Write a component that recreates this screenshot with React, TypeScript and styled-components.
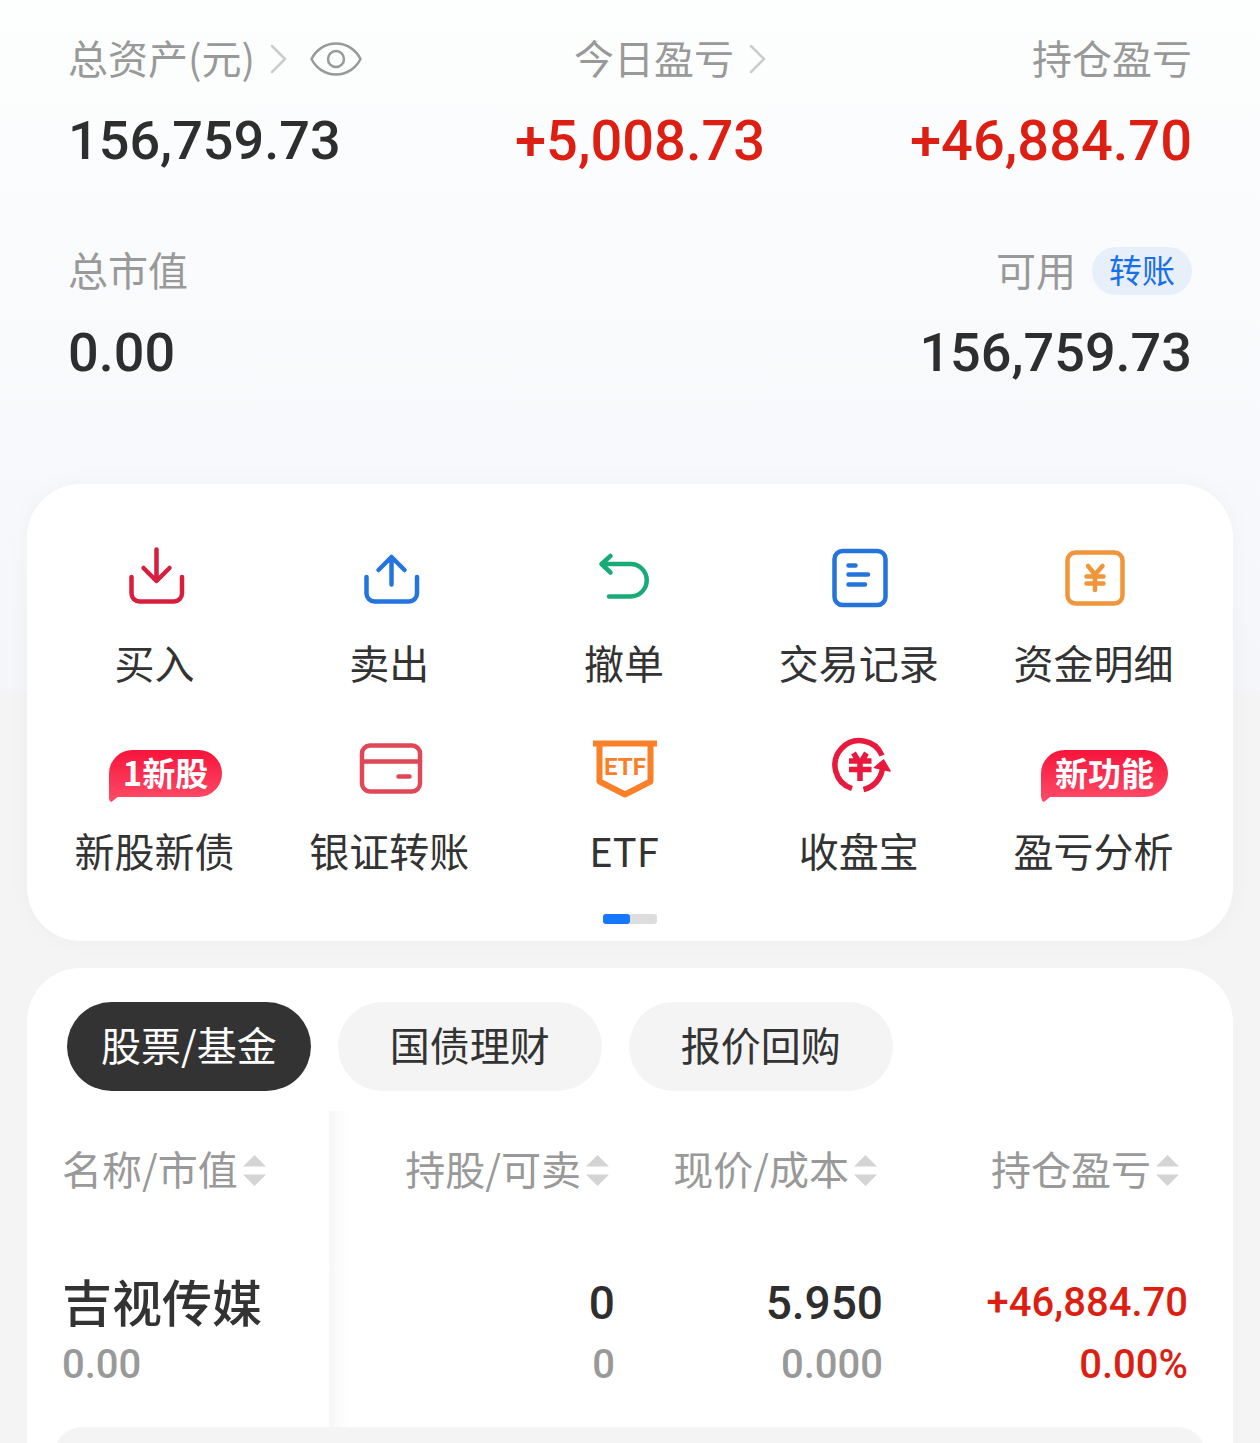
import React, { useState } from "react";
import styled, { createGlobalStyle } from "styled-components";

const cjk = `"Noto Sans CJK SC", "Noto Sans", sans-serif`;
const digits = `Roboto, "Noto Sans CJK SC", sans-serif`;

const color = {
  ink: "#2e2e2e",
  text: "#333333",
  muted: "#999999",
  rise: "#dc1f12",
  brand: "#1677ff",
  fill: "#f4f4f4",
};

const GlobalStyle = createGlobalStyle`
  *, *::before, *::after { box-sizing: border-box; }
  body { margin: 0; background: ${color.fill}; font-family: ${cjk}; color: ${color.text}; }
  button { border: 0; padding: 0; margin: 0; background: none; color: inherit; font: inherit; cursor: pointer; }
  a { color: inherit; text-decoration: none; }
`;

const Page = styled.main`
  background: linear-gradient(#fdfffe 0, #fafbfd 240px, #f4f6f9 691px, ${color.fill} 691px);
`;

const Summary = styled.header`
  display: flex;
  flex-direction: column;
  gap: 76px;
  padding: 31px 68px 105px;
`;

const SummaryRow = styled.div`
  display: flex;
  justify-content: space-between;
`;

const Metric = styled.section<{ $end?: boolean }>`
  display: flex;
  flex-direction: column;
  gap: 28px;
  align-items: ${(p) => (p.$end ? "flex-end" : "flex-start")};
`;

const MetricLabel = styled.div`
  display: flex;
  align-items: center;
  gap: 16px;
  height: 56px;
  font-size: 40px;
  line-height: 56px;
  color: ${color.muted};
`;

const LabelText = styled.span`
  padding-bottom: 4px;
`;

const LabelButton = styled.button`
  display: flex;
  align-items: center;
  gap: 16px;
`;

const EyeButton = styled.button`
  display: flex;
  padding: 0 8px;
`;

const MetricValue = styled.div<{ $rise?: boolean }>`
  font-family: ${digits};
  font-size: ${(p) => (p.$rise ? 56 : 54)}px;
  font-weight: 500;
  line-height: 52px;
  color: ${(p) => (p.$rise ? color.rise : color.ink)};
`;

const TransferButton = styled.button`
  height: 48px;
  padding: 0 17px 4px;
  border-radius: 24px;
  background: #e7effb;
  color: #1a70e8;
  font-size: 33px;
  line-height: 44px;
`;

const Card = styled.section`
  margin: 0 27px;
  background: #ffffff;
`;

const ActionCard = styled(Card)`
  padding: 61px 0 17px;
  border-radius: 54px;
  box-shadow: 0 0 24px rgba(0, 0, 0, 0.03);
`;

const ActionGrid = styled.nav`
  display: grid;
  grid-template-columns: repeat(5, 1fr);
  row-gap: 43px;
  padding: 0 22px 0 10px;
`;

const Action = styled.a`
  display: flex;
  flex-direction: column;
  align-items: center;
  gap: 25px;
  font-size: 40px;
  line-height: 56px;
`;

const IconSlot = styled.span<{ $badge?: boolean }>`
  display: flex;
  align-items: flex-end;
  height: 64px;
  padding-left: ${(p) => (p.$badge ? "22px" : "0")};
`;

const Glyph = styled.svg`
  display: block;
  overflow: visible;
  fill: none;
  stroke: currentColor;
  stroke-width: 4.5;
  stroke-linecap: round;
  stroke-linejoin: round;
`;

const Badge = styled.span`
  position: relative;
  height: 47px;
  padding: 0 14px;
  border-radius: 24px 24px 24px 0;
  background: linear-gradient(#f5143a, #ff4764);
  color: #ffffff;
  font-size: 33px;
  font-weight: 700;
  line-height: 44px;

  &::after {
    content: "";
    position: absolute;
    left: 0;
    top: 100%;
    width: 9px;
    height: 5px;
    background: #ff4764;
    clip-path: polygon(0 0, 100% 0, 30% 100%, 12% 80%);
  }
`;

const Pager = styled.div`
  display: flex;
  width: 54px;
  height: 10px;
  margin: 36px auto 0;
  border-radius: 3px;
  background: #dddddd;
`;

const PagerDot = styled.span`
  width: 50%;
  border-radius: 3px;
  background: ${color.brand};
`;

const HoldingsCard = styled(Card)`
  margin-top: 27px;
  padding-top: 34px;
  border-radius: 54px 54px 0 0;
`;

const Tabs = styled.div`
  display: flex;
  gap: 27px;
  padding: 0 40px;
`;

const Tab = styled.button<{ $active: boolean }>`
  height: 89px;
  padding: 0 ${(p) => (p.$active ? 34 : 52)}px 6px;
  border-radius: 45px;
  background: ${(p) => (p.$active ? color.text : color.fill)};
  color: ${(p) => (p.$active ? "#ffffff" : color.text)};
  font-size: 40px;
  line-height: 56px;
`;

const Table = styled.table`
  width: 100%;
  margin-top: 20px;
  border-collapse: collapse;
  table-layout: fixed;
  text-align: right;
`;

const Col = styled.col<{ $width?: number }>`
  width: ${(p) => (p.$width ? `${p.$width}px` : "auto")};
`;

const pinned = `
  position: relative;
  text-align: left;
  padding-left: 35px;

  &::after {
    content: "";
    position: absolute;
    top: 0;
    bottom: 0;
    left: 100%;
    width: 22px;
    background: linear-gradient(to right, #f7f7f7, #ffffff);
  }
`;

const Head = styled.th<{ $pinned?: boolean; $last?: boolean }>`
  height: 118px;
  padding: 0 ${(p) => (p.$last ? 54 : 6)}px 0 0;
  color: ${color.muted};
  font-size: 40px;
  font-weight: 400;
  line-height: 56px;
  white-space: nowrap;
  ${(p) => (p.$pinned ? pinned : "")}
`;

const SortButton = styled.button`
  display: inline-flex;
  align-items: center;
  gap: 5px;
  vertical-align: top;
`;

const Cell = styled.td<{ $pinned?: boolean; $last?: boolean }>`
  padding: 42px ${(p) => (p.$last ? 45 : 0)}px 32px 0;
  ${(p) => (p.$pinned ? pinned : "")}
`;

const StockName = styled.div`
  padding-bottom: 6px;
  font-size: 50px;
  font-weight: 500;
  line-height: 58px;
`;

const Figure = styled.div<{ $rise?: boolean }>`
  font-family: ${digits};
  font-size: ${(p) => (p.$rise ? 40 : 46)}px;
  font-weight: 500;
  line-height: 64px;
  color: ${(p) => (p.$rise ? color.rise : color.ink)};
`;

const SubFigure = styled.div<{ $rise?: boolean }>`
  font-family: ${digits};
  font-size: 40px;
  font-weight: 500;
  line-height: 60px;
  color: ${(p) => (p.$rise ? color.rise : color.muted)};
`;

const PanelPeek = styled.div`
  height: 16px;
  padding: 0 27px;
  overflow: hidden;
`;

const Panel = styled.div`
  height: 64px;
  border-radius: 28px;
  background: ${color.fill};
`;

const Chevron = () => (
  <Glyph width="15" height="26" viewBox="0 0 15 26" style={{ color: "#cccccc" }} aria-hidden="true">
    <path strokeWidth="2.5" d="M1 0 14 13 1 26" />
  </Glyph>
);

const Eye = () => (
  <Glyph width="52" height="34" viewBox="0 0 52 34" aria-hidden="true">
    <g strokeWidth="2.5">
      <path d="M1.500 17C6 8 15 1.500 26 1.500S46 8 50.500 17C46 26 37 32.500 26 32.500S6 26 1.500 17Z" />
      <circle cx="26" cy="17" r="8" />
    </g>
  </Glyph>
);

const SortArrows = () => (
  <svg width="23" height="31" viewBox="0 0 23 31" fill="#d4d4d4" aria-hidden="true">
    <path d="M11.500 0 23 11.500H0ZM0 19.500H23L11.500 31Z" />
  </svg>
);

type IconProps = { tint: string; children: React.ReactNode };

const Icon = ({ tint, children }: IconProps) => (
  <Glyph width="64" height="64" viewBox="0 0 64 64" style={{ color: tint }} aria-hidden="true">
    {children}
  </Glyph>
);

const actions: { label: string; badge?: string; icon?: React.ReactNode }[] = [
  {
    label: "买入",
    icon: (
      <Icon tint="#d81e3f">
        <path d="M34.500 4.500V35.500M21.500 23 34.500 36 47.500 23M9.500 32V48.500A8 8 0 0 0 17.500 56.500H52A8 8 0 0 0 60 48.500V32" />
      </Icon>
    ),
  },
  {
    label: "卖出",
    icon: (
      <Icon tint="#2474e0">
        <path d="M34.500 12V39.500M21.500 25 34.500 12 47.500 25M9.500 32V48.500A8 8 0 0 0 17.500 56.500H52A8 8 0 0 0 60 48.500V32" />
      </Icon>
    ),
  },
  {
    label: "撤单",
    icon: (
      <Icon tint="#18ab78">
        <path d="M18.500 11 9.500 19 18.500 27.500M10 19H38.500A16 16 0 0 1 38.500 51.500H17" />
      </Icon>
    ),
  },
  {
    label: "交易记录",
    icon: (
      <Icon tint="#2474dc">
        <rect x="7.500" y="6" width="51" height="54" rx="8" />
        <path d="M21.500 20.500H28.500M21.500 29.500H41M21.500 39.500H38" />
      </Icon>
    ),
  },
  {
    label: "资金明细",
    icon: (
      <Icon tint="#f0953a">
        <rect x="5.500" y="7.500" width="55" height="51" rx="8" />
        <path d="M26 21 33 29.500 40.500 21M33 30V45M24.500 31.500H41.500M24.500 38.500H41.500" />
      </Icon>
    ),
  },
  { label: "新股新债", badge: "1新股" },
  {
    label: "银证转账",
    icon: (
      <Icon tint="#e04858">
        <rect x="5" y="12.500" width="58" height="46" rx="8" />
        <path d="M5 28.500H63M41.500 43.500H52.500" />
      </Icon>
    ),
  },
  {
    label: "ETF",
    icon: (
      <Icon tint="#f98028">
        <path strokeWidth="6" strokeLinecap="butt" d="M1 10.500H65M7.500 11V48.500L33 61.500 58.500 48.500V11" />
        <text
          x="33"
          y="41.500"
          textAnchor="middle"
          fill="currentColor"
          stroke="none"
          fontFamily="Roboto, sans-serif"
          fontSize="24"
          fontWeight="700"
        >
          ETF
        </text>
      </Icon>
    ),
  },
  {
    label: "收盘宝",
    icon: (
      <Icon tint="#e8193c">
        <g strokeWidth="5.500" strokeLinecap="butt" strokeLinejoin="miter">
          <path d="M55 22.500A24.500 24.500 0 1 0 25 55.500M36.500 56.500A24.500 24.500 0 0 0 55.500 35" />
          <path d="M26.500 20 31 27.500M39.500 20 35 27.500M33 27V48M22 28H44.500M22 36.500H44.500" />
        </g>
        <path fill="currentColor" strokeWidth="1.500" d="M56.500 27 47.500 34.500 63 38Z" />
      </Icon>
    ),
  },
  { label: "盈亏分析", badge: "新功能" },
];

const tabs = ["股票/基金", "国债理财", "报价回购"];
const columns = ["名称/市值", "持股/可卖", "现价/成本", "持仓盈亏"];

export default function App() {
  const [tab, setTab] = useState(0);

  return (
    <Page>
      <GlobalStyle />
      <Summary>
        <SummaryRow>
          <Metric>
            <MetricLabel>
              <LabelButton>
                <LabelText>总资产(元)</LabelText>
                <Chevron />
              </LabelButton>
              <EyeButton aria-label="隐藏金额">
                <Eye />
              </EyeButton>
            </MetricLabel>
            <MetricValue>156,759.73</MetricValue>
          </Metric>
          <Metric $end>
            <MetricLabel>
              <LabelButton>
                <LabelText>今日盈亏</LabelText>
                <Chevron />
              </LabelButton>
            </MetricLabel>
            <MetricValue $rise>+5,008.73</MetricValue>
          </Metric>
          <Metric $end>
            <MetricLabel>
              <LabelText>持仓盈亏</LabelText>
            </MetricLabel>
            <MetricValue $rise>+46,884.70</MetricValue>
          </Metric>
        </SummaryRow>
        <SummaryRow>
          <Metric>
            <MetricLabel>
              <LabelText>总市值</LabelText>
            </MetricLabel>
            <MetricValue>0.00</MetricValue>
          </Metric>
          <Metric $end>
            <MetricLabel>
              <LabelText>可用</LabelText>
              <TransferButton>转账</TransferButton>
            </MetricLabel>
            <MetricValue>156,759.73</MetricValue>
          </Metric>
        </SummaryRow>
      </Summary>

      <ActionCard>
        <ActionGrid>
          {actions.map((a) => (
            <Action key={a.label} href="#">
              <IconSlot $badge={!!a.badge}>{a.badge ? <Badge>{a.badge}</Badge> : a.icon}</IconSlot>
              {a.label}
            </Action>
          ))}
        </ActionGrid>
        <Pager>
          <PagerDot />
        </Pager>
      </ActionCard>

      <HoldingsCard>
        <Tabs role="tablist">
          {tabs.map((name, i) => (
            <Tab key={name} role="tab" aria-selected={i === tab} $active={i === tab} onClick={() => setTab(i)}>
              {name}
            </Tab>
          ))}
        </Tabs>
        <Table>
          <colgroup>
            <Col $width={302} />
            <Col $width={286} />
            <Col $width={268} />
            <Col />
          </colgroup>
          <thead>
            <tr>
              {columns.map((name, i) => (
                <Head key={name} $pinned={i === 0} $last={i === 3}>
                  <SortButton>
                    <LabelText>{name}</LabelText>
                    <SortArrows />
                  </SortButton>
                </Head>
              ))}
            </tr>
          </thead>
          <tbody>
            <tr>
              <Cell $pinned>
                <StockName>吉视传媒</StockName>
                <SubFigure>0.00</SubFigure>
              </Cell>
              <Cell>
                <Figure>0</Figure>
                <SubFigure>0</SubFigure>
              </Cell>
              <Cell>
                <Figure>5.950</Figure>
                <SubFigure>0.000</SubFigure>
              </Cell>
              <Cell $last>
                <Figure $rise>+46,884.70</Figure>
                <SubFigure $rise>0.00%</SubFigure>
              </Cell>
            </tr>
          </tbody>
        </Table>
        <PanelPeek>
          <Panel />
        </PanelPeek>
      </HoldingsCard>
    </Page>
  );
}
